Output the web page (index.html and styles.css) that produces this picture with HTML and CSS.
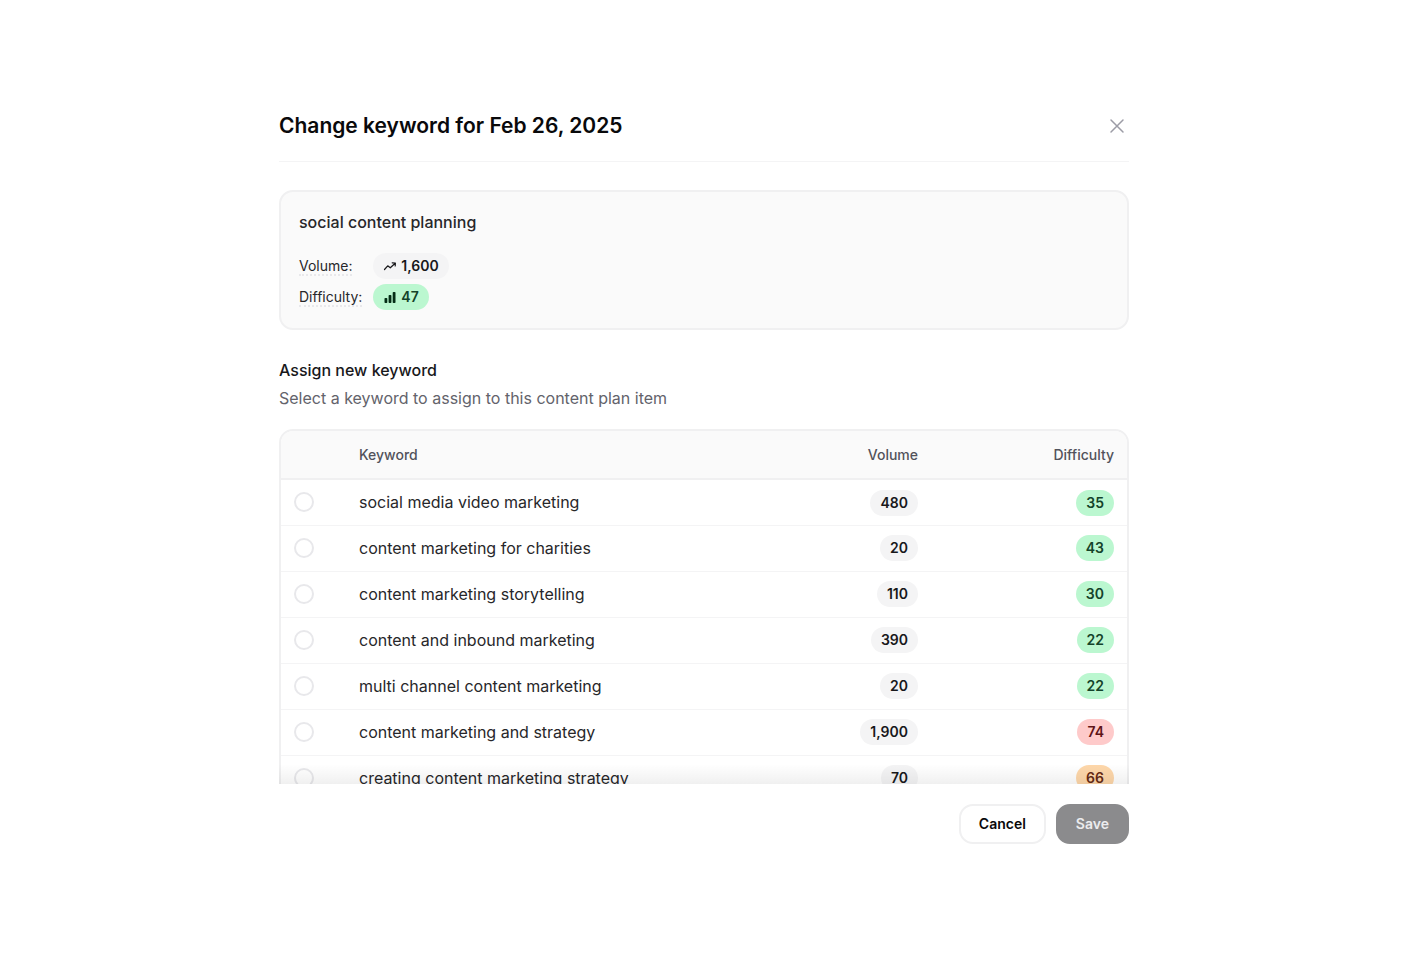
FILE: index.html
```
<!DOCTYPE html>
<html lang="en">
<head>
  <meta charset="UTF-8">
  <meta name="viewport" content="width=device-width, initial-scale=1">
  <title>Change keyword</title>
  <link rel="stylesheet" href="styles.css">
</head>
<body>
  <form class="dialog" role="dialog" aria-labelledby="dialog-title">
    <header class="dialog-header">
      <h1 id="dialog-title">Change keyword for Feb 26, 2025</h1>
      <button type="button" class="close" aria-label="Close">
        <svg width="16" height="16" viewBox="0 0 16 16" fill="none" stroke="currentColor" stroke-width="1.5" stroke-linecap="round">
          <path d="M2 2l12 12M14 2L2 14"/>
        </svg>
      </button>
    </header>

    <div class="dialog-body">
      <section class="current">
        <h2>social content planning</h2>
        <dl class="stats">
          <dt><span class="hint">Volume:</span></dt>
          <dd>
            <span class="badge">
              <svg width="14" height="14" viewBox="0 0 14 14" fill="none" stroke="currentColor" stroke-width="1.2" stroke-linecap="round" stroke-linejoin="round">
                <path d="M1.5 10.5l3.2-3.7 2.6 2 4.9-4.6M9.2 3.8l3.2.2-.2 3"/>
              </svg>
              1,600
            </span>
          </dd>
          <dt><span class="hint">Difficulty:</span></dt>
          <dd>
            <span class="badge green">
              <svg width="14" height="14" viewBox="0 0 14 14" fill="currentColor">
                <rect x="1.5" y="8" width="2.8" height="5" rx=".8"/>
                <rect x="5.6" y="5" width="2.8" height="8" rx=".8"/>
                <rect x="9.7" y="2" width="2.8" height="11" rx=".8"/>
              </svg>
              47
            </span>
          </dd>
        </dl>
      </section>

      <section class="assign">
        <h2>Assign new keyword</h2>
        <p>Select a keyword to assign to this content plan item</p>

        <div class="table-wrap">
          <table>
            <thead>
              <tr>
                <th class="pick"></th>
                <th>Keyword</th>
                <th class="volume">Volume</th>
                <th class="difficulty">Difficulty</th>
              </tr>
            </thead>
            <tbody>
              <tr>
                <td class="pick"><input type="radio" name="keyword" id="kw1"></td>
                <td><label for="kw1">social media video marketing</label></td>
                <td class="volume"><span class="badge">480</span></td>
                <td class="difficulty"><span class="badge green">35</span></td>
              </tr>
              <tr>
                <td class="pick"><input type="radio" name="keyword" id="kw2"></td>
                <td><label for="kw2">content marketing for charities</label></td>
                <td class="volume"><span class="badge">20</span></td>
                <td class="difficulty"><span class="badge green">43</span></td>
              </tr>
              <tr>
                <td class="pick"><input type="radio" name="keyword" id="kw3"></td>
                <td><label for="kw3">content marketing storytelling</label></td>
                <td class="volume"><span class="badge">110</span></td>
                <td class="difficulty"><span class="badge green">30</span></td>
              </tr>
              <tr>
                <td class="pick"><input type="radio" name="keyword" id="kw4"></td>
                <td><label for="kw4">content and inbound marketing</label></td>
                <td class="volume"><span class="badge">390</span></td>
                <td class="difficulty"><span class="badge green">22</span></td>
              </tr>
              <tr>
                <td class="pick"><input type="radio" name="keyword" id="kw5"></td>
                <td><label for="kw5">multi channel content marketing</label></td>
                <td class="volume"><span class="badge">20</span></td>
                <td class="difficulty"><span class="badge green">22</span></td>
              </tr>
              <tr>
                <td class="pick"><input type="radio" name="keyword" id="kw6"></td>
                <td><label for="kw6">content marketing and strategy</label></td>
                <td class="volume"><span class="badge">1,900</span></td>
                <td class="difficulty"><span class="badge red">74</span></td>
              </tr>
              <tr>
                <td class="pick"><input type="radio" name="keyword" id="kw7"></td>
                <td><label for="kw7">creating content marketing strategy</label></td>
                <td class="volume"><span class="badge">70</span></td>
                <td class="difficulty"><span class="badge orange">66</span></td>
              </tr>
            </tbody>
          </table>
        </div>
      </section>
    </div>

    <footer class="dialog-footer">
      <button type="button" class="btn">Cancel</button>
      <button type="submit" class="btn primary" disabled>Save</button>
    </footer>
  </form>
</body>
</html>
```
FILE: styles.css
```
* {
  box-sizing: border-box;
}

body {
  margin: 0;
  height: 100vh;
  padding: 107px 24px 116px;
  display: flex;
  justify-content: center;
  background: #fff;
  color: #27272a;
  font-family: Inter, "Liberation Sans", sans-serif;
  font-size: 16px;
  line-height: 24px;
}

h1, h2, p, dl, dd {
  margin: 0;
}

.dialog {
  display: flex;
  flex-direction: column;
  width: 100%;
  max-width: 850px;
}

/* header */
.dialog-header {
  display: flex;
  align-items: center;
  justify-content: space-between;
  padding-bottom: 16px;
  border-bottom: 1px solid #f4f4f5;
}

h1 {
  color: #09090b;
  font-size: 21px;
  line-height: 38px;
  font-weight: 600;
}

.close {
  display: flex;
  padding: 4px;
  border: none;
  background: none;
  color: #9c9ca6;
  cursor: pointer;
}

/* scrolling part */
.dialog-body {
  flex: 1;
  min-height: 0;
  padding-top: 28px;
  overflow-y: auto;
  scrollbar-width: none;
}

h2 {
  font-size: 16px;
  line-height: 24px;
  font-weight: 500;
}

.current {
  padding: 18px;
  border: 2px solid #f0f0f1;
  border-radius: 14px;
  background: #fafafa;
}

.stats {
  display: grid;
  grid-template-columns: max-content 1fr;
  align-items: center;
  gap: 5px 11px;
  margin-top: 19px;
  font-size: 14px;
  line-height: 20px;
}

.stats dd {
  display: flex;
}

.hint {
  border-bottom: 2px dotted #e8e8eb;
}

.badge {
  display: inline-flex;
  align-items: center;
  gap: 4px;
  padding: 3px 10px;
  border-radius: 13px;
  background: #f4f4f5;
  color: #18181b;
  font-size: 14px;
  line-height: 20px;
  font-weight: 600;
}

.green {
  background: #bbf7d0;
  color: #14432a;
}

.green svg {
  color: #052e16;
}

.red {
  background: #fecaca;
  color: #5f1418;
}

.orange {
  background: #fed7aa;
  color: #662a14;
}

.assign {
  margin-top: 28px;
}

.assign h2 {
  color: #18181b;
}

.assign p {
  margin-top: 4px;
  color: #63636b;
}

/* keyword table */
.table-wrap {
  margin-top: 19px;
  border: 2px solid #f0f0f1;
  border-radius: 14px;
  overflow: hidden;
}

table {
  width: 100%;
  border-collapse: collapse;
}

th {
  height: 48px;
  padding: 0 13px;
  border-bottom: 2px solid #f0f0f1;
  background: #fafafa;
  color: #52525b;
  font-size: 14px;
  font-weight: 500;
  text-align: left;
}

td {
  height: 46px;
  padding: 0 13px;
  border-bottom: 1px solid #f4f4f5;
}

.pick {
  width: 65px;
}

.volume {
  width: 210px;
  text-align: right;
}

.difficulty {
  width: 196px;
  text-align: right;
}

td .badge {
  vertical-align: middle;
}

input[type="radio"] {
  appearance: none;
  display: block;
  width: 20px;
  height: 20px;
  margin: 0;
  border: 2px solid #e8e8eb;
  border-radius: 50%;
  background: #fff;
}

input[type="radio"]:checked {
  border: 6px solid #18181b;
}

/* footer */
.dialog-footer {
  position: relative;
  display: flex;
  justify-content: flex-end;
  gap: 10px;
  padding-top: 20px;
  background: #fff;
}

/* shade over the rows that scroll under the footer */
.dialog-footer::before {
  content: "";
  position: absolute;
  left: 0;
  right: 0;
  bottom: 100%;
  height: 20px;
  background: linear-gradient(to top, rgba(0, 0, 0, 0.06), rgba(0, 0, 0, 0));
  pointer-events: none;
}

.btn {
  padding: 8px 18px;
  border: 2px solid #f0f0f1;
  border-radius: 14px;
  background: #fff;
  color: #09090b;
  font-family: inherit;
  font-size: 14px;
  line-height: 20px;
  font-weight: 600;
  cursor: pointer;
}

.primary {
  border-color: #8b8b8d;
  background: #8b8b8d;
  color: #ececee;
}
```
